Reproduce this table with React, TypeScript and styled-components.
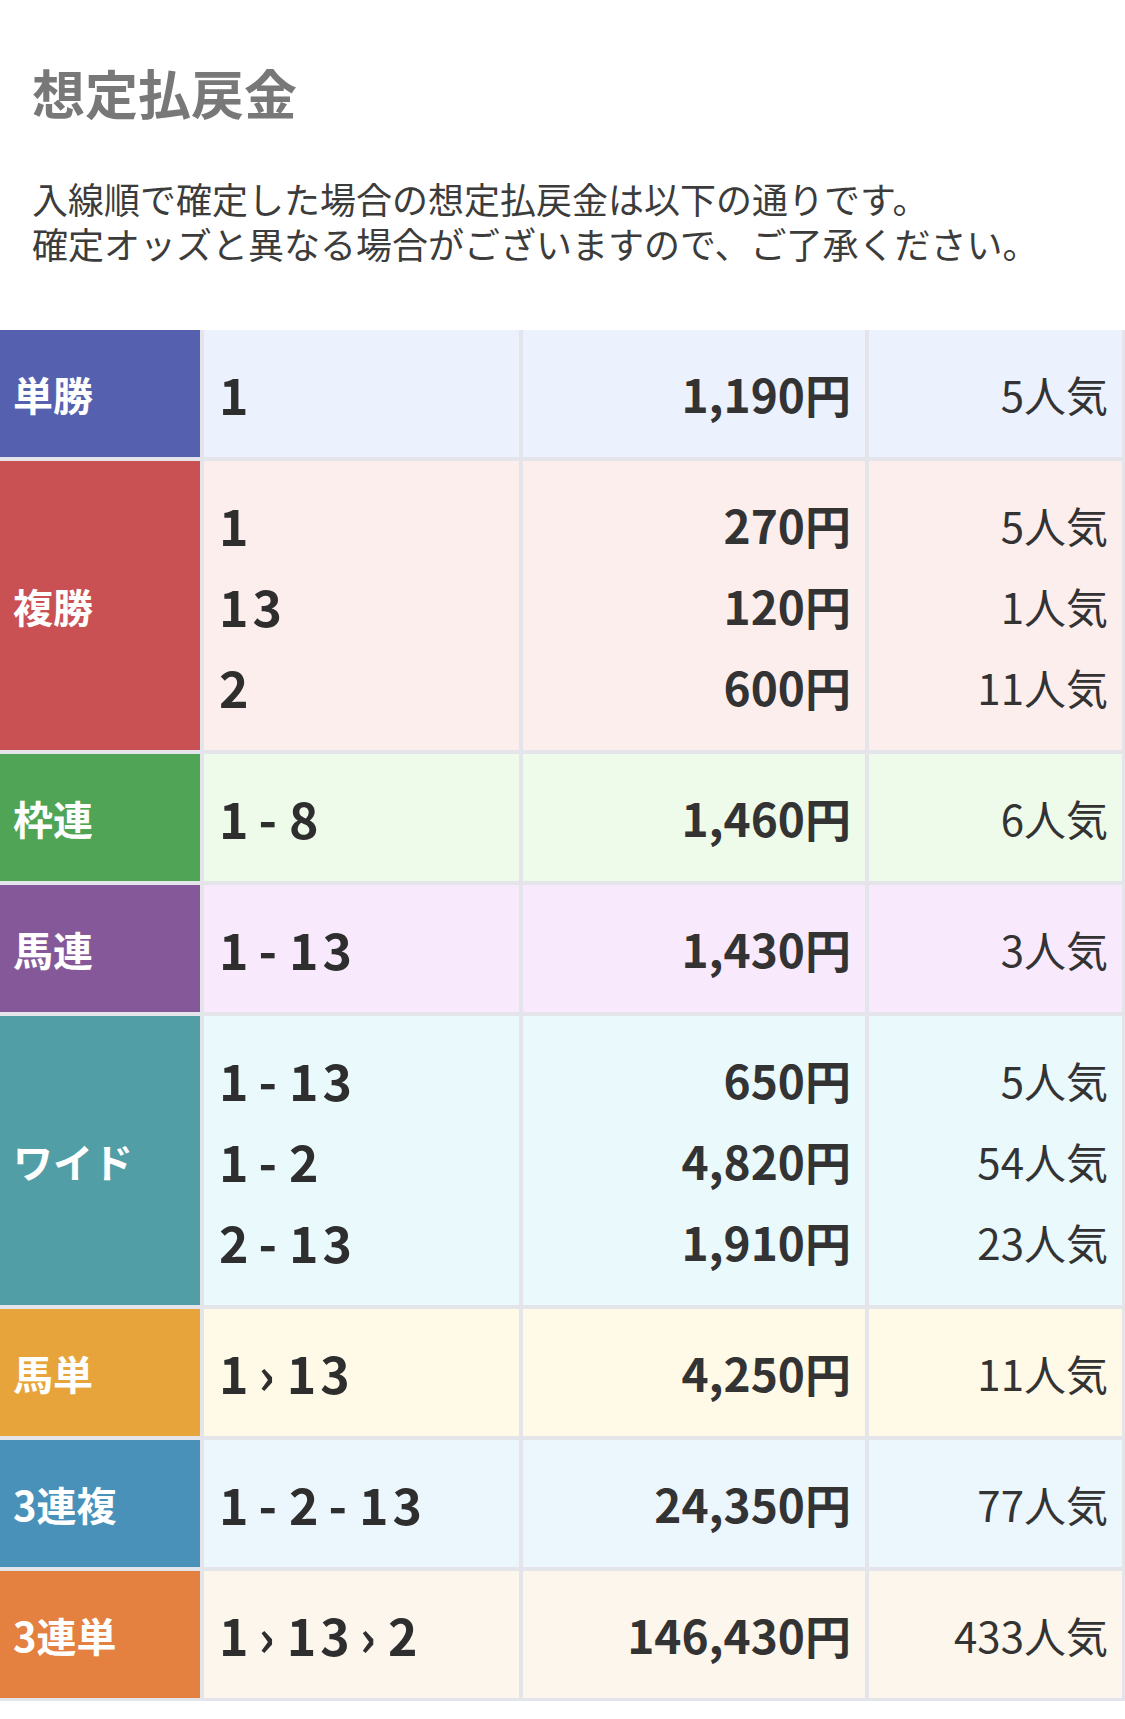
import React from "react";
import styled, { createGlobalStyle } from "styled-components";

const GlobalStyle = createGlobalStyle`
  html, body {
    margin: 0;
    padding: 0;
    background: #fff;
  }
  body {
    font-family: "Noto Sans CJK JP", "Noto Sans", sans-serif;
    color: #333;
  }
`;

const Page = styled.div`
  width: 1125px;
  min-height: 1719px;
  background: #fff;
`;

const Header = styled.div`
  padding: 58px 32px 0 32px;
  height: 272px;
  box-sizing: border-box;
`;

const Title = styled.h1`
  margin: 0;
  font-size: 53px;
  font-weight: 700;
  line-height: 68px;
  color: #787878;
`;

const Lead = styled.p`
  margin: 50px 0 0 0;
  font-size: 36px;
  line-height: 45px;
  color: #3c3c3c;
`;

const Table = styled.div`
  margin-top: 58px;
  display: grid;
  grid-template-columns: 200px 315px 342px 1fr;
  gap: 4px;
  padding: 0 3px 3px 0;
  background: #e4e4eb;
`;

const Label = styled.div<{ $color: string }>`
  background: ${(p) => p.$color};
  color: #fff;
  font-size: 40px;
  font-weight: 700;
  display: flex;
  align-items: center;
  padding-left: 13px;
`;

const Cell = styled.div<{ $bg: string; $align?: "left" | "right" }>`
  background: ${(p) => p.$bg};
  padding: 23px 14px 23px 15px;
  text-align: ${(p) => p.$align || "right"};
`;

const Combo = styled.div`
  font-size: 50px;
  font-weight: 700;
  line-height: 81px;
  letter-spacing: 0.08em;
  color: #2e2e2e;
`;

const Sep = styled.span`
  margin: 0 8px 0 6px;
`;

const Payout = styled.div`
  font-size: 46px;
  font-weight: 700;
  line-height: 81px;
  color: #333;
`;

const Popular = styled.div`
  font-size: 42px;
  font-weight: 400;
  line-height: 81px;
  color: #333;
`;

type Result = { combo: string; yen: string; pop: string };
type Bet = { name: string; color: string; bg: string; results: Result[] };

const bets: Bet[] = [
  { name: "単勝", color: "#5560ae", bg: "#ebf1fd", results: [{ combo: "1", yen: "1,190", pop: "5" }] },
  {
    name: "複勝",
    color: "#c95153",
    bg: "#fdeeee",
    results: [
      { combo: "1", yen: "270", pop: "5" },
      { combo: "13", yen: "120", pop: "1" },
      { combo: "2", yen: "600", pop: "11" },
    ],
  },
  { name: "枠連", color: "#4fa456", bg: "#effbea", results: [{ combo: "1-8", yen: "1,460", pop: "6" }] },
  { name: "馬連", color: "#855999", bg: "#f8e9fc", results: [{ combo: "1-13", yen: "1,430", pop: "3" }] },
  {
    name: "ワイド",
    color: "#529ea7",
    bg: "#e9f9fc",
    results: [
      { combo: "1-13", yen: "650", pop: "5" },
      { combo: "1-2", yen: "4,820", pop: "54" },
      { combo: "2-13", yen: "1,910", pop: "23" },
    ],
  },
  { name: "馬単", color: "#e6a43a", bg: "#fffae8", results: [{ combo: "1›13", yen: "4,250", pop: "11" }] },
  { name: "3連複", color: "#4a91ba", bg: "#ebf6fd", results: [{ combo: "1-2-13", yen: "24,350", pop: "77" }] },
  { name: "3連単", color: "#e48140", bg: "#fcf6ec", results: [{ combo: "1›13›2", yen: "146,430", pop: "433" }] },
];

// split "1-2-13" into numbers and separators so the separators get their own spacing
const renderCombo = (combo: string) =>
  combo.split(/([-›])/).map((part, i) =>
    part === "-" || part === "›" ? <Sep key={i}>{part}</Sep> : <span key={i}>{part}</span>
  );

const App: React.FC = () => {
  return (
    <>
      <GlobalStyle />
      <Page>
        <Header>
          <Title>想定払戻金</Title>
          <Lead>
            入線順で確定した場合の想定払戻金は以下の通りです。
            <br />
            確定オッズと異なる場合がございますので、ご了承ください。
          </Lead>
        </Header>
        <Table>
          {bets.map((b) => (
            <React.Fragment key={b.name}>
              <Label $color={b.color}>{b.name}</Label>
              <Cell $bg={b.bg} $align="left">
                {b.results.map((r, i) => (
                  <Combo key={i}>{renderCombo(r.combo)}</Combo>
                ))}
              </Cell>
              <Cell $bg={b.bg}>
                {b.results.map((r, i) => (
                  <Payout key={i}>{r.yen}円</Payout>
                ))}
              </Cell>
              <Cell $bg={b.bg}>
                {b.results.map((r, i) => (
                  <Popular key={i}>{r.pop}人気</Popular>
                ))}
              </Cell>
            </React.Fragment>
          ))}
        </Table>
      </Page>
    </>
  );
};

export default App;
